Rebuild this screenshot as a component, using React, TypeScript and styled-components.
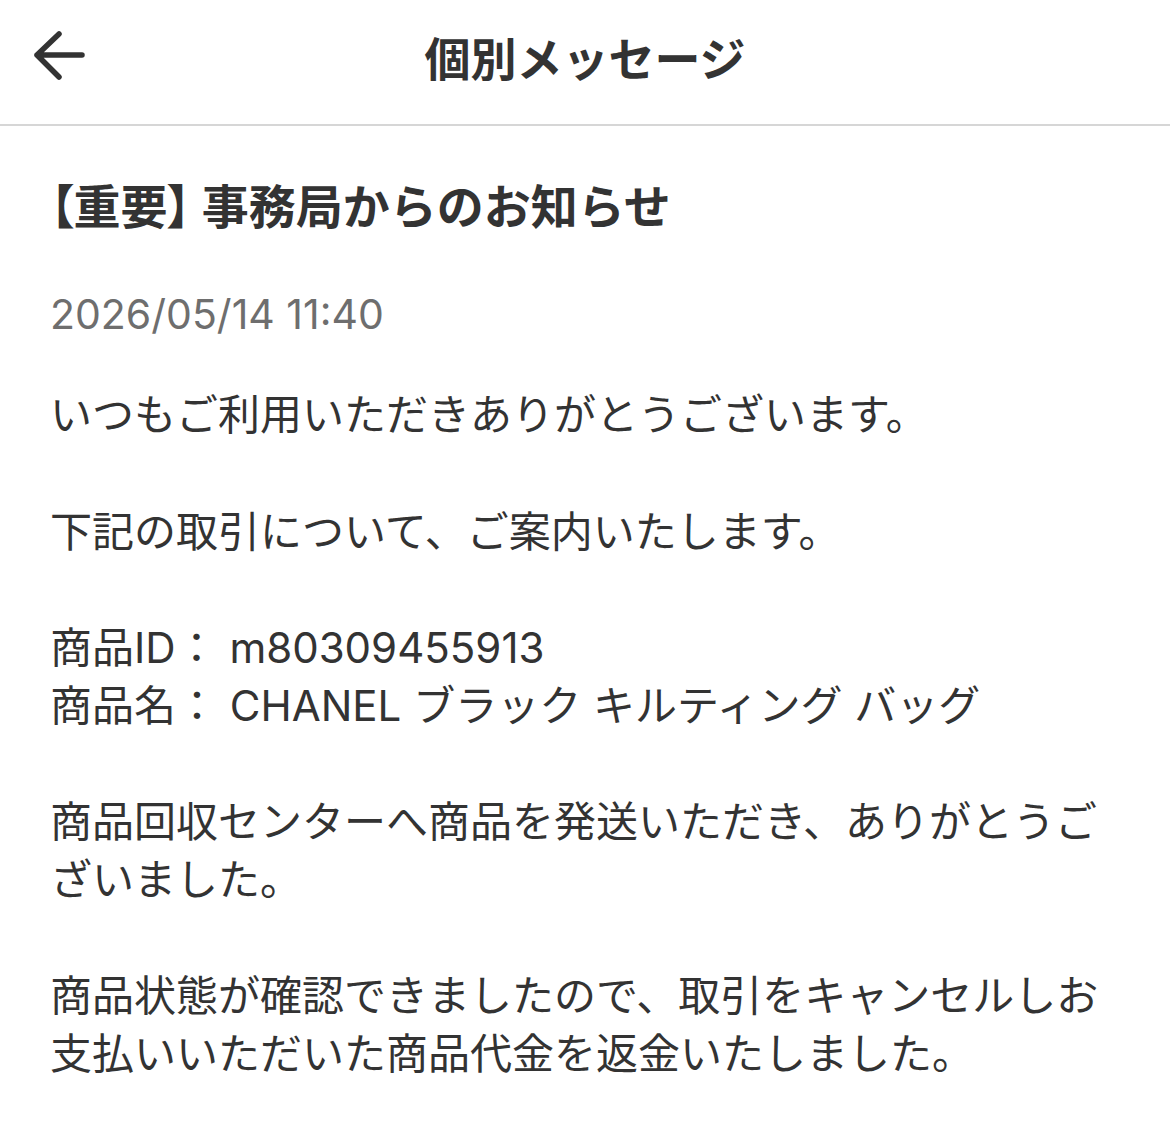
import React from "react";
import styled, { createGlobalStyle } from "styled-components";

const GlobalStyle = createGlobalStyle`
  html, body {
    margin: 0;
    padding: 0;
    background: #ffffff;
  }
  body {
    font-family: "Noto Sans CJK JP", "Noto Sans", sans-serif;
    color: #333333;
  }
`;

const Page = styled.div`
  width: 1170px;
  min-height: 1132px;
  background: #ffffff;
`;

const Header = styled.header`
  position: relative;
  height: 126px;
  border-bottom: 2px solid #d6d6d6;
  box-sizing: border-box;
  display: flex;
  align-items: center;
  justify-content: center;
`;

const BackButton = styled.button`
  position: absolute;
  left: 32px;
  top: 30px;
  width: 56px;
  height: 56px;
  padding: 0;
  border: none;
  background: none;
  color: #333333;
  svg {
    display: block;
  }
`;

const HeaderTitle = styled.h1`
  margin: 0 0 12px;
  font-size: 46px;
  font-weight: 700;
  color: #333333;
`;

const Content = styled.main`
  padding: 0 50px;
`;

const Subject = styled.h2`
  margin: 0;
  padding-top: 48px;
  font-size: 47px;
  line-height: 60px;
  font-weight: 700;
  color: #333333;
`;

const Bracket = styled.span`
  font-feature-settings: "palt";
`;

const DateLine = styled.div`
  margin-top: 56px;
  font-family: Inter, "Noto Sans CJK JP", sans-serif;
  font-size: 41px;
  line-height: 48px;
  color: #6e6e6e;
`;

const Body = styled.div`
  margin-top: 48px;
  font-family: Inter, "Noto Sans CJK JP", sans-serif;
  font-size: 42px;
  line-height: 57.5px;
  color: #333333;
`;

const Paragraph = styled.p`
  margin: 0 0 59px;
`;

const Line = styled.span`
  display: block;
`;

export default function App() {
  return (
    <Page>
      <GlobalStyle />
      <Header>
        <BackButton aria-label="戻る">
          <svg width="56" height="56" viewBox="0 0 56 56" fill="none">
            <path
              d="M50 25H5M27 4L5 25L27 47"
              stroke="currentColor"
              strokeWidth="5.5"
              strokeLinecap="round"
              strokeLinejoin="round"
            />
          </svg>
        </BackButton>
        <HeaderTitle>個別メッセージ</HeaderTitle>
      </Header>
      <Content>
        <Subject>
          <Bracket>【</Bracket>重要<Bracket>】</Bracket> 事務局からのお知らせ
        </Subject>
        <DateLine>2026/05/14 11:40</DateLine>
        <Body>
          <Paragraph>いつもご利用いただきありがとうございます。</Paragraph>
          <Paragraph>下記の取引について、ご案内いたします。</Paragraph>
          <Paragraph>
            <Line>商品ID： m80309455913</Line>
            <Line>商品名： CHANEL ブラック キルティング バッグ</Line>
          </Paragraph>
          <Paragraph>
            商品回収センターへ商品を発送いただき、ありがとうございました。
          </Paragraph>
          <Paragraph>
            商品状態が確認できましたので、取引をキャンセルしお支払いいただいた商品代金を返金いたしました。
          </Paragraph>
        </Body>
      </Content>
    </Page>
  );
}
